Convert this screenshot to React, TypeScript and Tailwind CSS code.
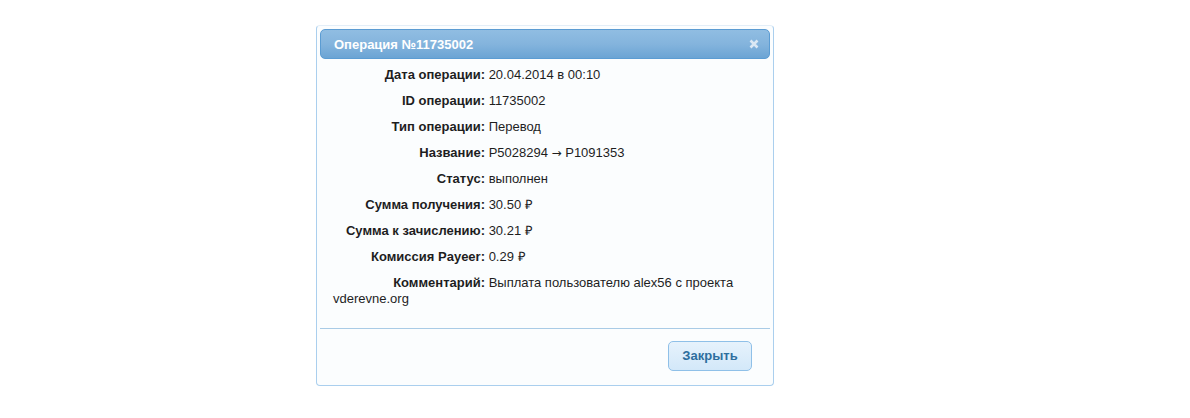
import React from "react";

const rows: [string, React.ReactNode][] = [
  ["Дата операции:", "20.04.2014 в 00:10"],
  ["ID операции:", "11735002"],
  ["Тип операции:", "Перевод"],
  [
    "Название:",
    <>
      P5028294 <span style={{ fontFamily: '"DejaVu Sans", sans-serif' }} className="text-[12px]">→</span> P1091353
    </>,
  ],
  ["Статус:", "выполнен"],
  ["Сумма получения:", "30.50 ₽"],
  ["Сумма к зачислению:", "30.21 ₽"],
  ["Комиссия Payeer:", "0.29 ₽"],
  ["Комментарий:", "Выплата пользователю alex56 с проекта vderevne.org"],
];

export default function App() {
  return (
    <div
      className="w-[1190px] h-[418px] bg-white overflow-hidden"
      style={{ fontFamily: '"Liberation Sans", Arial, sans-serif' }}
    >
      <div className="ml-[316px] mt-[25px] w-[458px] h-[361px] rounded-[4px] border border-[#aacfee] border-t-[#e3eef8] bg-[#fbfdfe] p-[3px] flex flex-col">
        <div className="h-[30px] shrink-0 rounded-[5px] border border-[#5b9cd3] bg-gradient-to-b from-[#90bde2] via-[#84b4dd] to-[#6ba4d4] flex items-center justify-between pl-[13px] pr-[10px]">
          <span className="text-white font-bold text-[13px] leading-none">Операция №11735002</span>
          <svg width="10" height="10" viewBox="0 0 10 10">
            <path d="M1.5 1.5 L8.5 8.5 M8.5 1.5 L1.5 8.5" stroke="#dbe8f4" strokeWidth="2.6" strokeLinecap="butt" />
          </svg>
        </div>
        <div className="pt-[8px] pl-[13px] pr-[14px] h-[270px] shrink-0 border-b border-[#a9cbe6]">
          {rows.map(([k, v]) => (
            <div key={k} className="text-[13px] leading-[16px] text-[#1e1e1e] mb-[10px]">
              <span className="inline-block w-[152px] text-right font-bold">{k}</span>{" "}
              {v}
            </div>
          ))}
        </div>
        <div className="flex justify-end pr-[18px] pt-[12px]">
          <button className="w-[84px] h-[30px] rounded-[5px] border border-[#8fc0e8] bg-gradient-to-b from-[#e6f2fc] to-[#d3e8f9] text-[#2e6e9e] font-bold text-[13px]">
            Закрыть
          </button>
        </div>
      </div>
    </div>
  );
}
